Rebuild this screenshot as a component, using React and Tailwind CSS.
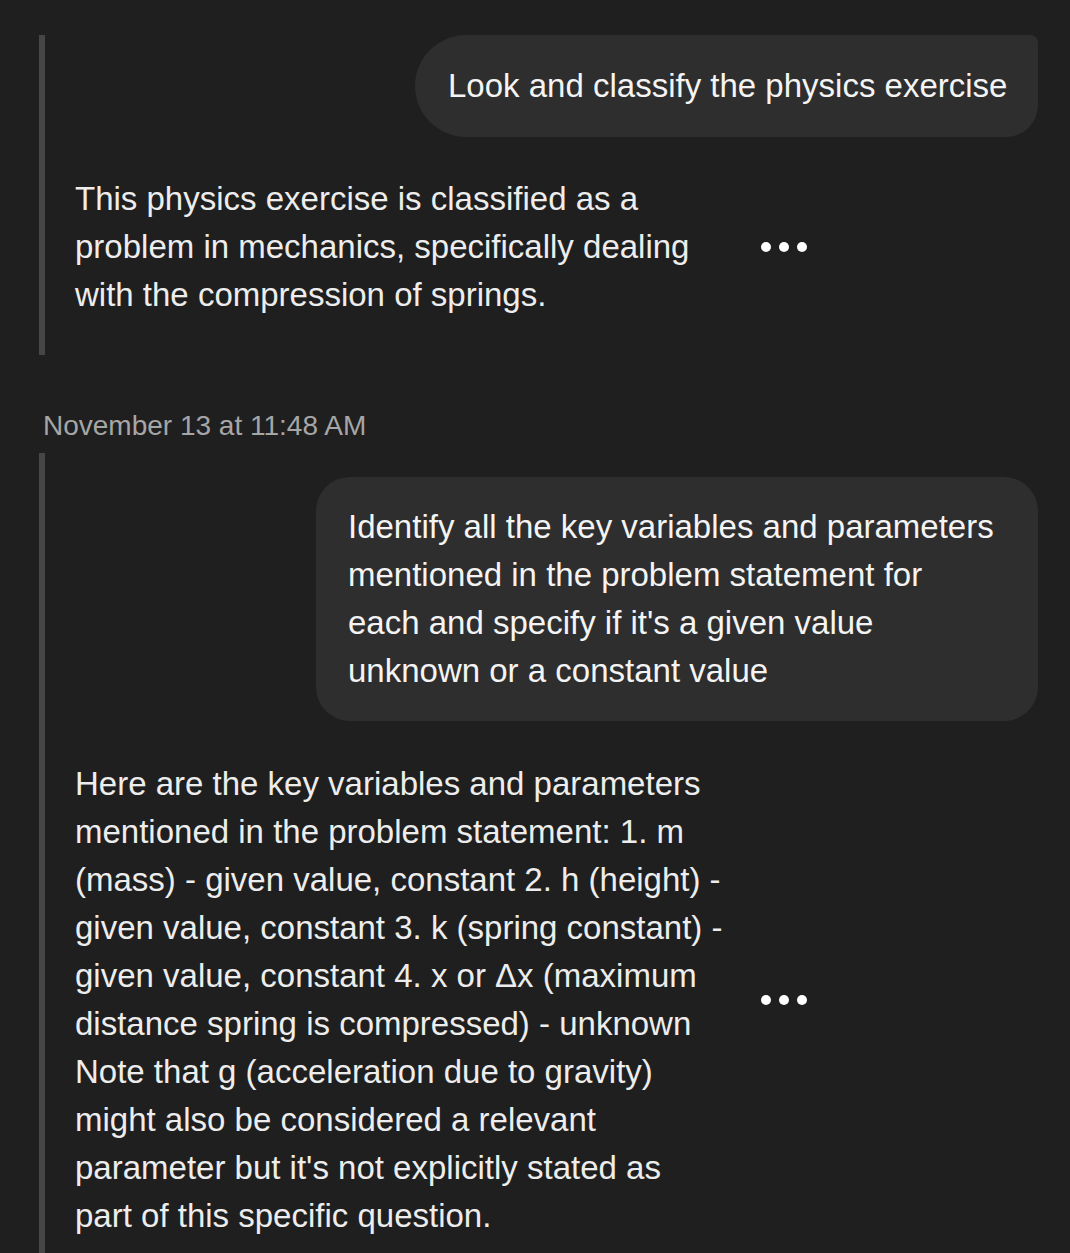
const answerOne = [
  "This physics exercise is classified as a",
  "problem in mechanics, specifically dealing",
  "with the compression of springs.",
];

const questionTwo = [
  "Identify all the key variables and parameters",
  "mentioned in the problem statement for",
  "each and specify if it's a given value",
  "unknown or a constant value",
];

const answerTwo = [
  "Here are the key variables and parameters",
  "mentioned in the problem statement: 1. m",
  "(mass) - given value, constant 2. h (height) -",
  "given value, constant 3. k (spring constant) -",
  "given value, constant 4. x or Δx (maximum",
  "distance spring is compressed) - unknown",
  "Note that g (acceleration due to gravity)",
  "might also be considered a relevant",
  "parameter but it's not explicitly stated as",
  "part of this specific question.",
];

function Lines({ lines }) {
  return lines.map((line) => (
    <div key={line} className="whitespace-nowrap">
      {line}
    </div>
  ));
}

function MoreDots() {
  return (
    <div className="flex items-center gap-[8px]">
      <span className="h-[10px] w-[10px] rounded-full bg-white" />
      <span className="h-[10px] w-[10px] rounded-full bg-white" />
      <span className="h-[10px] w-[10px] rounded-full bg-white" />
    </div>
  );
}

function Reply({ lines }) {
  return (
    <div className="flex items-center pl-[30px]">
      <div className="w-[686px] text-[#ededed]">
        <Lines lines={lines} />
      </div>
      <MoreDots />
    </div>
  );
}

export default function App() {
  return (
    <div className="h-[1253px] overflow-hidden bg-[#1f1f1f] pt-[35px] font-['Liberation_Sans',Arial,sans-serif] text-[33px] leading-[48px]">
      {/* first exchange */}
      <div className="ml-[39px] border-l-[6px] border-[#464646] pr-[32px] pb-[36px]">
        <div className="ml-auto w-[623px] whitespace-nowrap rounded-tl-[51px] rounded-bl-[51px] rounded-tr-[8px] rounded-br-[32px] bg-[#2e2e2e] pl-[33px] pr-[30px] py-[27px] text-[#f4f4f4]">
          Look and classify the physics exercise
        </div>
        <div className="mt-[38px]">
          <Reply lines={answerOne} />
        </div>
      </div>

      <div className="ml-[43px] mt-[53px] text-[28px] leading-[36px] text-[#a6a6a6]">
        November 13 at 11:48 AM
      </div>

      {/* second exchange */}
      <div className="ml-[39px] mt-[9px] border-l-[6px] border-[#464646] pr-[32px] pt-[24px] pb-[30px]">
        <div className="ml-auto w-[722px] rounded-[34px] bg-[#2e2e2e] px-[32px] py-[26px] text-[#f4f4f4]">
          <Lines lines={questionTwo} />
        </div>
        <div className="mt-[39px]">
          <Reply lines={answerTwo} />
        </div>
      </div>
    </div>
  );
}
